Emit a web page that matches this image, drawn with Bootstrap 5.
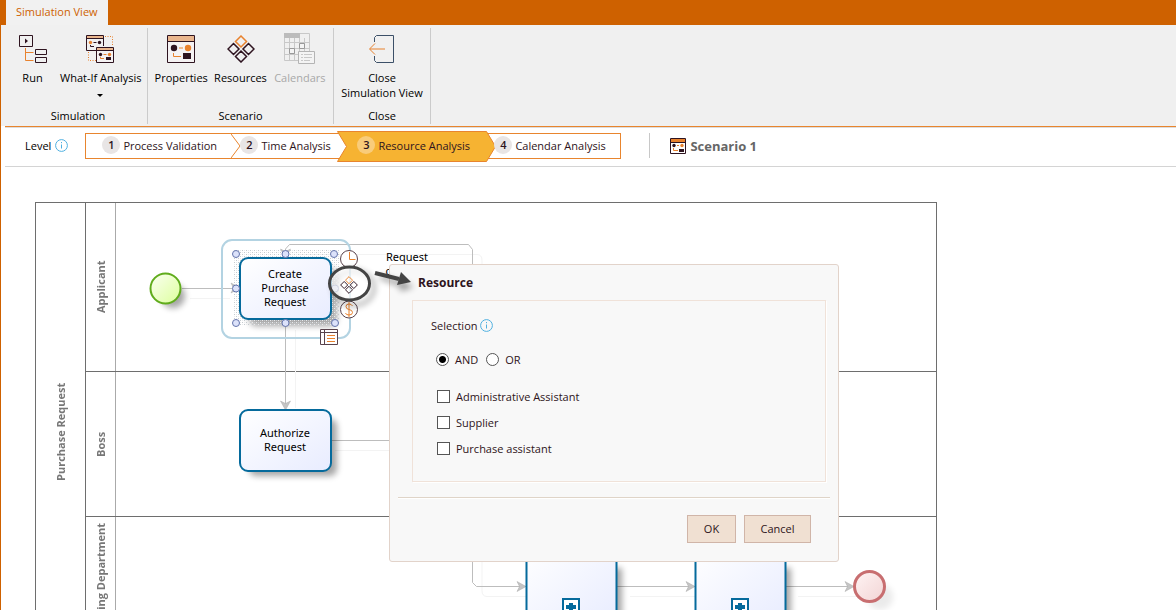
<!DOCTYPE html>
<html lang="en">
<head>
<meta charset="utf-8">
<meta name="viewport" content="width=device-width, initial-scale=1">
<title>Simulation View</title>
<link href="https://cdn.jsdelivr.net/npm/bootstrap@5.3.0/dist/css/bootstrap.min.css" rel="stylesheet">
<style>
:root{--brand:#ce6100;--line:#e8852e;--ink:#2e1420;--accent:#e8822e}
body{font:11px/15px "Open Sans","Noto Sans",sans-serif;color:#000;border-left:1px solid var(--brand);background:#fff;overflow:hidden}
.title-strip{background:var(--brand);height:25px;padding-left:5px}
.title-tab{background:#f1f1f1;color:var(--brand);padding:0 10px;line-height:24px;text-decoration:none}
.ribbon{background:#f0f0f0;height:101px;padding:3px 0 2px 4px}
.tool-group{border-right:1px solid #cbcbcb;padding-bottom:1px}
.tool-group .tool{font-size:11px;line-height:15px;color:#000;background:none;border:0;padding:7px 0 0;white-space:nowrap}
.tool-group .tool:disabled{color:#a8a8a8}
.tool svg{display:block;margin:0 auto 7px}
.level-bar{margin-left:4px;height:41px;border-top:1px solid var(--line);border-bottom:1px solid #d4d4d4;padding:0 0 2px 20px;box-shadow:inset 0 1px #ddd}
.steps{position:relative;z-index:0;width:536px;height:26px;border:1px solid var(--line);margin:0 0 0 17px}
.step{position:relative;background:none;border:0;padding:0 0 1px;font-size:11px;line-height:15px;color:var(--ink);display:flex;align-items:center;height:24px;white-space:nowrap}
.step svg.shape{position:absolute;z-index:-1}
.step-no{width:18px;height:18px;border-radius:50%;background:#e8e5e5;font-weight:600;line-height:18px;text-align:center;flex:none;margin-right:3px}
.scenario{font-size:13px;line-height:18px;font-weight:700;color:#666;border-left:1px solid #c8c8c8;padding-left:20px;margin-left:28px;height:25px}
.canvas{min-height:0;padding:35px 0 0 34px}
.pool{width:902px;height:459px;border:1px solid #6e6e6e}
.pool-name,.lane-name{writing-mode:vertical-rl;transform:rotate(180deg);font-weight:700;color:#777;text-align:center;flex:none}
.pool-name{width:50px;line-height:50px;border-left:1px solid #6e6e6e}
.lane-name{width:30px;line-height:30px;border-left:1px solid #aaa}
.lane+.lane{border-top:1px solid #6e6e6e}
.diagram{position:absolute;left:-1px;top:0}
.diagram text{font:11px "Noto Sans","Open Sans",sans-serif;text-anchor:middle;fill:#000}
.annot{pointer-events:none}
.resource-dialog{position:absolute;left:388px;top:97px;width:450px;height:298px;background:#f8f8f8;border:1px solid #e2d3ca;border-radius:3px;padding:9px 8px;color:var(--ink)}
.resource-dialog h2{font-size:12px;line-height:18px;font-weight:700;margin:0 0 8px 20px}
.choice-box{border:1px solid #f0e2d9;box-shadow:1px 1px #fff;margin:0 4px 0 14px;height:182px;padding:17px 18px}
.resource-dialog hr{margin:15px 0 17px;border-color:#dfd4c8;opacity:1;box-shadow:0 1px #fff}
.mode-row{margin:19px 0 22px;padding-left:5px}
.resource-list{row-gap:11px;padding-left:6px}
.pick{appearance:none;width:13px;height:13px;margin:0;background:#fff;border:1px solid #555;flex:none}
.pick[type=radio]{border-radius:50%}
.pick[type=radio]:checked{background:radial-gradient(circle,#000 3px,#fff 4px)}
.pick+label{padding-left:6px}
.dlg-btn{font-size:11px;line-height:26px;height:28px;padding:0;width:49px;border:1px solid #d0b5a8;border-radius:0;background:#f0e0d2;color:var(--ink)}
.dlg-btn.wide{width:67px}
</style>
</head>
<body class="vh-100 d-flex flex-column">
<svg width="0" height="0" class="position-absolute" aria-hidden="true">
<defs>
<symbol id="i-info" viewBox="0 0 13 13"><circle cx="6.500" cy="6.500" r="5.900" fill="none" stroke="#4fb0e0"/><path d="M6.500 5.500v4M6.500 3v1.200" stroke="#4fb0e0" fill="none"/></symbol>
<symbol id="i-diamonds" viewBox="0 0 28 28"><g fill="none" stroke="#2e1420" stroke-width="1.500"><path d="M14 1l5.500 5.500L14 12 8.500 6.500z" stroke="#e8822e"/><path d="M6.500 8.500L12 14l-5.500 5.500L1 14zM21.500 8.500L27 14l-5.500 5.500L16 14zM14 16l5.500 5.500L14 27l-5.500-5.500z"/></g></symbol>
<symbol id="i-props" viewBox="0 0 28 28"><path d="M.5.500h27v27H.5z" fill="#f5f2f3" stroke="#2e1420"/><path d="M1 1h26v5H1z" fill="#e9b68e"/><path d="M0 6.500h28" stroke="#2e1420"/><circle cx="7" cy="13" r="3.200" fill="#2e1420"/><circle cx="21" cy="13" r="3.200" fill="#e8822e"/><path d="M12 13h4M6.500 18v3.500H14" fill="none" stroke="#e8822e"/><path d="M16 18h8v6h-8z" fill="#2e1420"/></symbol>
</defs>
</svg>

<header class="title-strip d-flex flex-shrink-0"><a class="title-tab" href="#">Simulation View</a></header>

<div class="ribbon d-flex flex-shrink-0" role="toolbar" aria-label="Ribbon">
<section class="tool-group d-flex flex-column justify-content-between" style="width:143px">
<div class="d-flex align-items-start">
<button class="tool" style="width:55px"><svg width="28" height="28" viewBox="0 0 28 28" fill="none" stroke="#2e1420"><path d="M.5.500h13v11H.5zM16.500 14.500h11v5h-11zM16.500 22.500h11v5h-11z"/><path d="M6 3.500l3 2.500-3 2.500z" fill="#2e1420" stroke="none"/><path d="M6.500 13v12.500h8M6.500 17.500h8" stroke="#e8822e"/></svg>Run</button>
<button class="tool" style="width:79px"><svg width="28" height="28" viewBox="0 0 28 28" fill="none" stroke="#2e1420"><path d="M10 15.500H.5v-15h17V11" /><path d="M1 1h16v2H1z" fill="#e9b68e" stroke="none"/><path d="M0 3.500h18"/><circle cx="4.500" cy="7.500" r="1.700" fill="#e8822e" stroke="none"/><circle cx="13.500" cy="7.500" r="1.700" fill="#2e1420" stroke="none"/><path d="M7.500 7.500h3M4.500 10v1.500H8"/><path d="M19 1.500h7.500V11M2.500 17v8.500H10" stroke="#e8822e" stroke-dasharray="1 1.500"/><path d="M10.500 12.500h17v15h-17z" fill="#f5f2f3"/><path d="M11 13h16v2H11z" fill="#e9b68e" stroke="none"/><path d="M10 15.500h18"/><circle cx="14.500" cy="19.500" r="1.700" fill="#2e1420" stroke="none"/><circle cx="23.500" cy="19.500" r="1.700" fill="#e8822e" stroke="none"/><path d="M17.500 19.500h3M14.500 22v1.500H18" stroke="#e8822e"/><path d="M20 22h5v3h-5z" fill="#2e1420" stroke="none"/></svg>What-If Analysis<svg width="6" height="3" viewBox="0 0 6 3" style="margin:9px auto 0"><path d="M0 0h6L3 3z"/></svg></button>
</div>
<div class="text-center ps-1">Simulation</div>
</section>
<section class="tool-group d-flex flex-column justify-content-between" style="width:186px">
<div class="d-flex align-items-start px-1">
<button class="tool" style="width:59px"><svg width="28" height="28"><use href="#i-props"/></svg>Properties</button>
<button class="tool" style="width:61px"><svg width="28" height="28"><use href="#i-diamonds"/></svg>Resources</button>
<button class="tool" style="width:59px" disabled><svg width="31" height="31" viewBox="0 0 31 31" fill="none" stroke="#c8c8c8" style="margin-top:-2px;margin-bottom:6px"><path d="M.5.500h25v27H.5zM.5 9.500h25M.5 15.500h25M.5 21.500h25M5.500 5v22M10.500 5v22M15.500 5v22M20.500 5v22"/><path d="M0 0h16v5H0z" fill="#bcbcbc" stroke="none"/><path d="M5.500 15.500h5v5h-5zM15.500 10.500h5v5h-5z" stroke="#999" fill="#f4f4f4"/><path d="M14.500 18.500h16v12h-16z" fill="#f4f4f4" stroke="#b4b4b4"/><path d="M17 21.500h2M17 24.500h2M17 27.500h2M20 21.500h8M20 24.500h8M20 27.500h6"/></svg>Calendars</button>
</div>
<div class="text-center">Scenario</div>
</section>
<section class="tool-group d-flex flex-column justify-content-between" style="width:97px">
<button class="tool"><svg width="28" height="28" viewBox="0 0 28 28" fill="none" stroke="#3c5068"><path d="M6.500 7V2.500l2-2h17v27h-17l-2-2V21"/><path d="M17 14H2M7 8.500L1.500 14 7 19.500" stroke="#e8822e"/></svg>Close<br>Simulation View</button>
<div class="text-center">Close</div>
</section>
</div>

<div class="level-bar d-flex align-items-center flex-shrink-0">
<span>Level</span><svg class="ms-1" width="13" height="13"><use href="#i-info"/></svg>
<nav class="steps d-flex" aria-label="Level">
<button class="step" style="width:146px;padding-left:16px"><svg class="shape" style="right:-9px;top:0" width="10" height="24" viewBox="0 0 10 24"><path d="M0 0l9 12-9 12" fill="none" stroke="#e8852e"/></svg><span class="step-no">1</span>Process Validation</button>
<button class="step" style="width:105px;padding-left:8px"><span class="step-no">2</span>Time Analysis</button>
<button class="step" style="width:159px;padding-left:20px"><svg class="shape" style="left:0;top:-3px" width="159" height="31" viewBox="0 0 159 31"><path d="M.5.500h149l9 15-9 15H.5l9-15z" fill="#f6b332" stroke="#e8852e"/></svg><span class="step-no" style="background:#f9cc7a">3</span>Resource Analysis</button>
<button class="step" style="width:124px"><span class="step-no" style="margin-left:-2px">4</span>Calendar Analysis</button>
</nav>
<div class="scenario d-flex align-items-center"><svg class="me-1" width="16" height="16" viewBox="0 0 16 16"><path d="M.5.500h15v15H.5z" fill="#fff" stroke="#2e1420"/><path d="M1 1h14v3H1z" fill="#e8822e"/><path d="M0 4.500h16" stroke="#2e1420"/><circle cx="4" cy="7.500" r="1.700" fill="#2e1420"/><circle cx="12" cy="7.500" r="1.700" fill="#e8822e"/><path d="M7 7.500h2M3.500 10v2.500H8" fill="none" stroke="#e8822e"/><path d="M9 11h5v3H9z" fill="#2e1420"/></svg>Scenario 1</div>
</div>

<main class="canvas position-relative flex-fill overflow-hidden">
<div class="pool d-flex">
<div class="pool-name">Purchase Request</div>
<div class="flex-fill d-flex flex-column">
<div class="lane d-flex" style="height:168px"><div class="lane-name">Applicant</div></div>
<div class="lane d-flex" style="height:145px"><div class="lane-name">Boss</div></div>
<div class="lane d-flex flex-fill"><div class="lane-name">Purchasing Department</div></div>
</div>
</div>

<svg class="diagram" width="940" height="443" viewBox="0 167 940 443">
<defs>
<linearGradient id="task" x1="0" y1="0" x2="1" y2="1"><stop offset="0" stop-color="#fff"/><stop offset="1" stop-color="#e8ecff"/></linearGradient>
<linearGradient id="start" x1="0" y1="0" x2="1" y2="1"><stop offset="0" stop-color="#fbfff2"/><stop offset="1" stop-color="#dcff9c"/></linearGradient>
<linearGradient id="end" x1="0" y1="0" x2="1" y2="1"><stop offset="0" stop-color="#fff4f4"/><stop offset="1" stop-color="#f2d4d4"/></linearGradient>
<pattern id="dots" width="4" height="4" patternUnits="userSpaceOnUse"><path d="M0 0h1v1H0zM2 2h1v1H2z" fill="#c4cace"/><path d="M2 0h1v1H2zM0 2h1v1H0z" fill="#e8eaec"/></pattern>
<filter id="soft" x="-30%" y="-30%" width="160%" height="160%"><feGaussianBlur stdDeviation="3"/></filter>
<path id="head" d="M0 0l-9-5 2.500 5L-9 5z" fill="#c4c4c4" stroke="#aaa" stroke-width=".5"/>
</defs>
<g fill="none" stroke="#f3f3f3"><path d="M190 298.500h40M295.500 330v78M335 450.500h60M299 254.500h178q5 0 5 6v330q0 6 5 6h40M630 596.500h66M798 596.500h60"/></g>
<g fill="none" stroke="#bdbdbd"><path d="M182 288.500h58M285.500 320v90M331 440.500h65M285.500 254v-5l4-4.500h179l4 5v333l4 4h51M617 586.500h78M786 586.500h68"/></g>
<g fill="#000" opacity=".35" filter="url(#soft)"><circle cx="173" cy="296" r="12"/><rect x="249" y="268" width="88" height="58" rx="7"/><rect x="249" y="419" width="88" height="57" rx="7"/><rect x="536" y="568" width="86" height="60"/><rect x="705" y="568" width="86" height="60"/></g>
<circle cx="880" cy="597" r="13" opacity=".08" filter="url(#soft)"/>
<circle cx="165.500" cy="288.500" r="15" fill="url(#start)" stroke="#60ac1c" stroke-width="2"/>
<rect x="222" y="240" width="128" height="98" rx="10" fill="none" stroke="#b3d3e2" stroke-width="2"/>
<rect x="233" y="250" width="106" height="76" fill="url(#dots)"/>
<use href="#head" x="240" y="288"/><use href="#head" transform="translate(285.500 258)rotate(90)"/><use href="#head" transform="translate(285.500 410)rotate(90)"/><use href="#head" x="526" y="586.500"/><use href="#head" x="695" y="586.500"/><use href="#head" x="854" y="586.500"/>
<g fill="url(#task)" stroke="#056a9c" stroke-width="2"><rect x="240" y="258" width="91" height="61" rx="8"/><rect x="240" y="410" width="91" height="61" rx="8"/><rect x="526.500" y="548" width="90" height="76" rx="8"/><rect x="695.500" y="548" width="90" height="76" rx="8"/></g>
<g fill="#fff" stroke="#056a9c" stroke-width="2"><path d="M563 599h16v15h-16zM732 599h16v15h-16z"/><path d="M566 607h10M571 603v10M735 607h10M740 603v10" stroke-width="4"/></g>
<circle cx="869.500" cy="586.500" r="15" fill="url(#end)" stroke="#c86e70" stroke-width="3"/>
<g fill="#dce2fa" stroke="#6575ac"><circle cx="236" cy="254" r="3.500"/><circle cx="285.500" cy="254" r="3.500"/><circle cx="334" cy="254" r="3.500"/><circle cx="236" cy="288.500" r="3.500"/><circle cx="335" cy="288.500" r="3.500"/><circle cx="236" cy="323" r="3.500"/><circle cx="285.500" cy="323" r="3.500"/><circle cx="335" cy="323" r="3.500"/></g>
<text x="285" y="278">Create</text><text x="285" y="292">Purchase</text><text x="285" y="306">Request</text>
<text x="285" y="437">Authorize</text><text x="285" y="451">Request</text>
<text x="407" y="261">Request</text><text x="408" y="275">changed</text>
<g fill="#fff" stroke="#59434c"><circle cx="349" cy="259" r="8.500"/><circle cx="349" cy="309.500" r="8.500"/><path d="M320.500 329.500h17v15h-17z"/><path d="M320 332.500h18M324.500 330v15"/></g>
<path d="M349.500 252v7.500h6M327 335.500h8M327 338.500h8M327 341.500h8M352.500 306q-1-2-3.500-2-3 0-3 2.500t3 3q3.500.500 3.500 3t-3.500 2.500q-3 0-3.500-2M349 302v15" fill="none" stroke="#e8822e"/>
</svg>

<section class="resource-dialog" role="dialog" aria-labelledby="dlg-title">
<h2 id="dlg-title">Resource</h2>
<div class="choice-box">
<div class="d-flex align-items-center">Selection<svg style="margin-left:2px" width="13" height="13"><use href="#i-info"/></svg></div>
<div class="mode-row d-flex align-items-center">
<input class="pick" type="radio" name="mode" id="m-and" checked><label class="me-2" for="m-and">AND</label>
<input class="pick" type="radio" name="mode" id="m-or"><label for="m-or">OR</label>
</div>
<div class="resource-list d-grid">
<div class="d-flex align-items-center"><input class="pick" type="checkbox" id="r1"><label for="r1">Administrative Assistant</label></div>
<div class="d-flex align-items-center"><input class="pick" type="checkbox" id="r2"><label for="r2">Supplier</label></div>
<div class="d-flex align-items-center"><input class="pick" type="checkbox" id="r3"><label for="r3">Purchase assistant</label></div>
</div>
</div>
<hr>
<div class="d-flex justify-content-end gap-2" style="padding-right:19px"><button class="dlg-btn">OK</button><button class="dlg-btn wide">Cancel</button></div>
</section>

<svg class="diagram annot" width="940" height="443" viewBox="0 167 940 443">
<g opacity=".4" filter="url(#soft)"><ellipse cx="354" cy="288" rx="20" ry="17" fill="none" stroke="#000" stroke-width="3"/><path d="M380 277l24 8" stroke="#000" stroke-width="4"/><path d="M400 280l14 7-14 4z"/></g>
<ellipse cx="349.500" cy="283.500" rx="20" ry="16.500" fill="#fff" fill-opacity=".7" stroke="#444" stroke-width="3"/>
<svg x="340" y="276" width="18" height="18"><use href="#i-diamonds"/></svg>
<path d="M375 273l24 6" stroke="#444" stroke-width="4"/><path d="M401 272l10 10-14 3z" fill="#444"/>
</svg>
</main>
<script src="https://cdn.jsdelivr.net/npm/bootstrap@5.3.0/dist/js/bootstrap.bundle.min.js"></script>
</body>
</html>
